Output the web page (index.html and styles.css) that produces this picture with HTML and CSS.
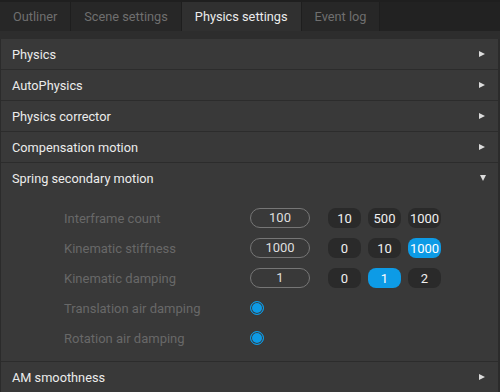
FILE: index.html
```html
<!DOCTYPE html>
<html lang="en">
  <head>
    <meta charset="UTF-8" />
    <meta name="viewport" content="width=device-width, initial-scale=1.0" />
    <title>Physics settings</title>
    <link rel="stylesheet" href="styles.css">
  </head>
  <body>
    <div id="tabs">
      <div class="tab">Outliner</div>
      <div class="tab">Scene settings</div>
      <div class="tab active">Physics settings</div>
      <div class="tab">Event log</div>
    </div>
    <div class="band"></div>
    <div id="panel">
      <div class="head">Physics<span class="arrow"></span></div>
      <div class="head">AutoPhysics<span class="arrow"></span></div>
      <div class="head">Physics corrector<span class="arrow"></span></div>
      <div class="head">Compensation motion<span class="arrow"></span></div>
      <div class="head open">Spring secondary motion<span class="arrow down"></span></div>
      <div class="body">
        <div class="row">
          <span class="label">Interframe count</span>
          <span class="field">100</span>
          <div class="presets">
            <button class="pre">10</button>
            <button class="pre">500</button>
            <button class="pre">1000</button>
          </div>
        </div>
        <div class="row">
          <span class="label">Kinematic stiffness</span>
          <span class="field">1000</span>
          <div class="presets">
            <button class="pre">0</button>
            <button class="pre">10</button>
            <button class="pre on">1000</button>
          </div>
        </div>
        <div class="row">
          <span class="label">Kinematic damping</span>
          <span class="field">1</span>
          <div class="presets">
            <button class="pre">0</button>
            <button class="pre on">1</button>
            <button class="pre">2</button>
          </div>
        </div>
        <div class="row">
          <span class="label">Translation air damping</span>
          <span class="radio"></span>
        </div>
        <div class="row">
          <span class="label">Rotation air damping</span>
          <span class="radio"></span>
        </div>
      </div>
      <div class="head">AM smoothness<span class="arrow"></span></div>
    </div>
  </body>
</html>
```

FILE: styles.css
```css
* {
  padding: 0;
  margin: 0;
  box-sizing: border-box;
}
body {
  background-color: #1f1f1f;
  font-family: Roboto, "Liberation Sans", sans-serif;
  font-size: 13px;
  padding-top: 2px;
  height: 392px;
  overflow: hidden;
}
#tabs {
  display: flex;
  height: 29px;
  background-color: #222222;
}
.tab {
  display: flex;
  align-items: center;
  padding: 0 13px;
  border-right: 1px solid #1e1e1e;
  background-color: #272727;
  color: #6f6f6f;
  font-size: 12.75px;
}
.tab.active {
  background-color: #303030;
  color: #ececec;
}
.band {
  height: 8px;
  background-color: #2d2d2d;
}
#panel {
  background-color: #393939;
  border-left: 1px solid #2b2b2b;
  border-right: 2px solid #2b2b2b;
  height: 353px;
}
.head {
  display: flex;
  align-items: center;
  justify-content: space-between;
  height: 31px;
  padding: 0 12px 0 11px;
  border-bottom: 1px solid #2c2c2c;
  color: #ececec;
  font-size: 12.75px;
}
.head.open {
  border-bottom: none;
  height: 30px;
}
.arrow {
  width: 0;
  height: 0;
  border-top: 3.5px solid transparent;
  border-bottom: 3.5px solid transparent;
  border-left: 6px solid #dcdcdc;
  margin-right: 1px;
}
.arrow.down {
  border-left: 3.5px solid transparent;
  border-right: 3.5px solid transparent;
  border-top: 6px solid #dcdcdc;
  border-bottom: none;
  margin-right: 0;
}
.body {
  padding: 10px 0 8px 63px;
  border-bottom: 1px solid #2c2c2c;
}
.row {
  display: flex;
  align-items: center;
  height: 30px;
}
.label {
  width: 186px;
  color: #686868;
}
.field {
  width: 60px;
  height: 20px;
  line-height: 18px;
  border: 1px solid #767676;
  border-radius: 10px;
  text-align: center;
  color: #dedede;
}
.presets {
  display: flex;
  gap: 7px;
  margin-left: 18px;
}
.pre {
  width: 33px;
  height: 20px;
  border: none;
  border-radius: 8px;
  background-color: #2a2a2a;
  color: #f0f0f0;
  font-family: inherit;
  font-size: 13px;
}
.pre.on {
  background-color: #0d9be6;
  color: #ffffff;
}
.radio {
  width: 14px;
  height: 14px;
  border: 1.5px solid #0d9be6;
  border-radius: 50%;
  background-color: #0d9be6;
  box-shadow: inset 0 0 0 1px #393939;
}
```
